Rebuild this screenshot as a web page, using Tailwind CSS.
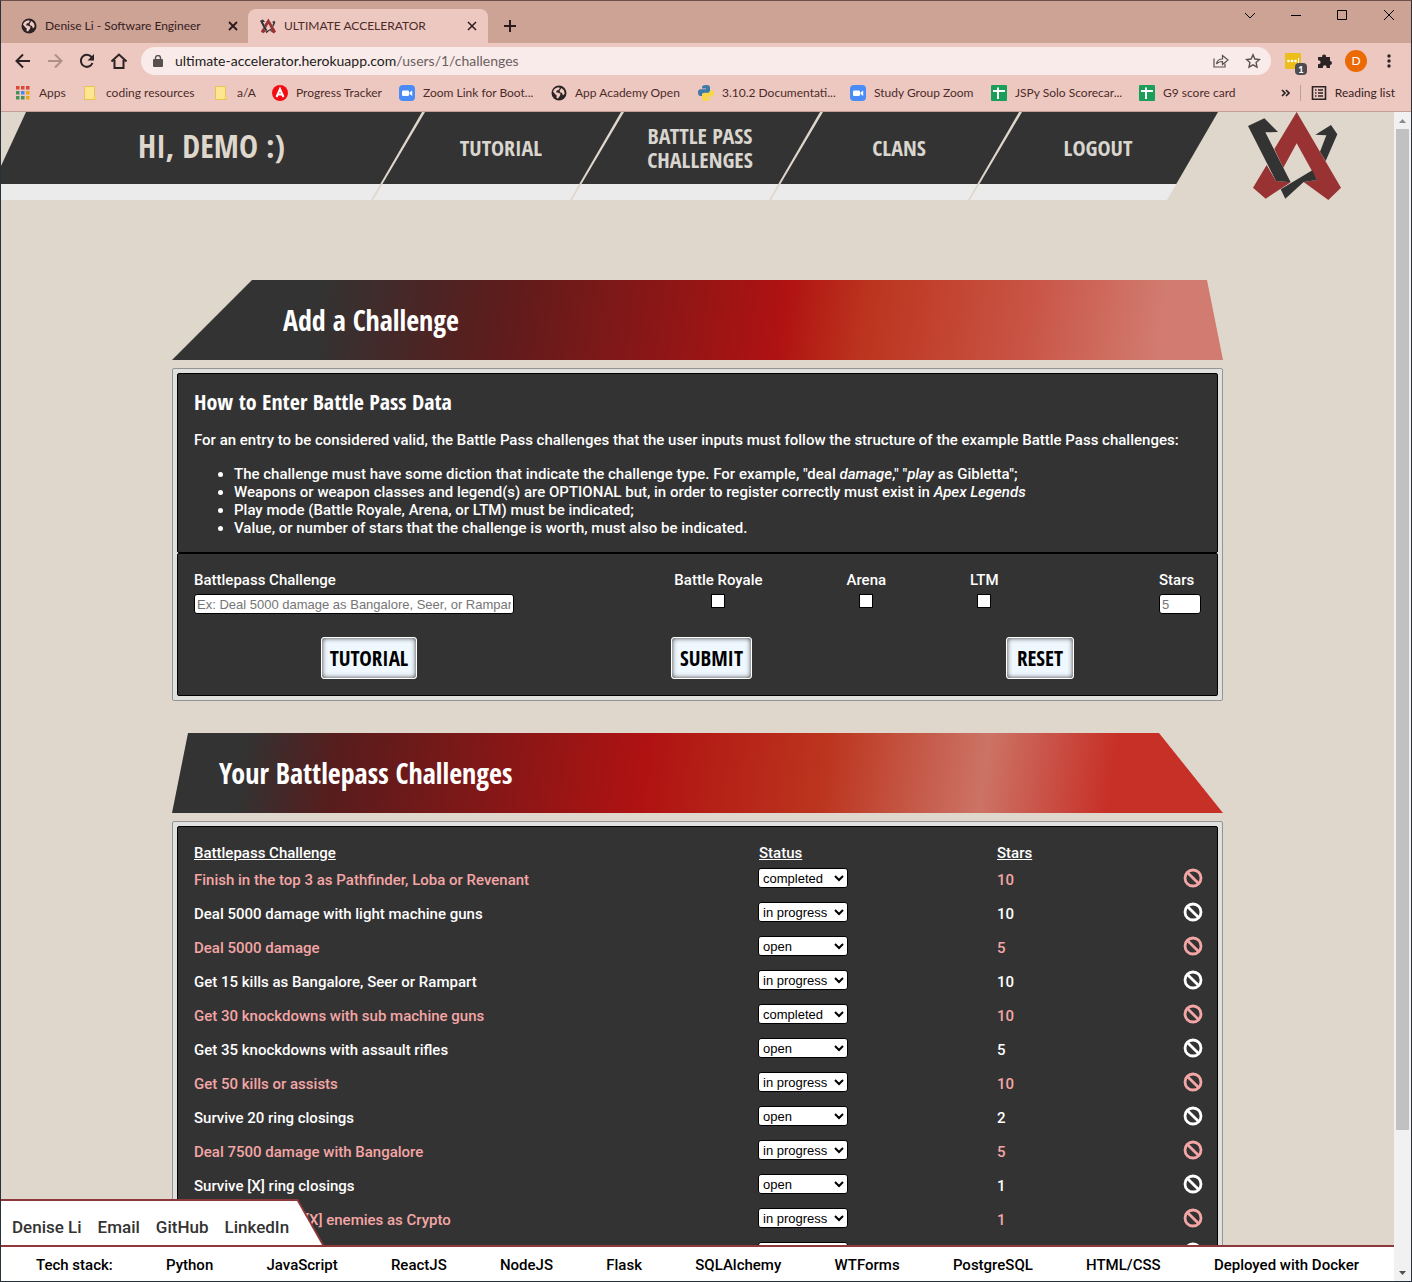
<!DOCTYPE html>
<html lang="en">
<head>
<meta charset="utf-8">
<title>ULTIMATE ACCELERATOR</title>
<script src="https://cdn.jsdelivr.net/npm/@tailwindcss/browser@4"></script>
</head>
<body class="flex h-screen flex-col overflow-hidden border border-[#26333d] border-t-[#6d4f4a] bg-[#dfd7cb] font-['Roboto',sans-serif] text-[15px] font-medium">

<svg class="hidden" aria-hidden="true">
  <symbol id="ua" viewBox="0 0 279 264">
    <path fill="#993233" d="M146 0 79 111l27 56 40-73 61 110-40 6 74 54 38-37zM56 159 15 227l38 33 75-49-44-4z"/>
    <path fill="#333" d="M0 42 49 19l41 41-38 1 76 150-44-4zM249 39l19 28-35 80-17-28 19-49-33-2zM98 232l95-57 14 29-40 6-55 50z"/>
  </symbol>
  <symbol id="globe" viewBox="0 0 16 16">
    <circle cx="8" cy="8" r="7.500" fill="#2b2324"/>
    <path fill="#efc9c2" d="M2 6.500c1-2.500 3-4 5.500-4.300L9 3 7.500 5 5.800 5.500 5 7.200l2.500.6 2 1-.5 2-2 2.700L5.500 13l.2-2.500L4 9z M10.500 3l2.500 2.500.7 3-1.700 2-1-2.500-2-.8-.4-1.700z"/>
  </symbol>
  <symbol id="folder" viewBox="0 0 16 16"><path fill="#fde68f" stroke="#e8c256" d="M2.500 1.500h10v10h1v3h-11z"/><path fill="#f3d36b" d="M11.500 11h2.500v3h-2.500z"/></symbol>
  <symbol id="zoomus" viewBox="0 0 16 16"><rect width="16" height="16" rx="4" fill="#4a8cf7"/><rect x="3" y="5.500" width="7" height="5.500" rx="1.300" fill="#fff"/><path fill="#fff" d="m10.500 7.500 2.700-2v5.500l-2.700-2z"/></symbol>
  <symbol id="sheet" viewBox="0 0 16 16"><rect width="16" height="16" rx="1" fill="#1a9f5b"/><path fill="#fff" d="M6 2.500h2V5h6v2H8v7H6V7H2V5h4z"/></symbol>
  <symbol id="ban" viewBox="0 0 20 20"><g fill="none" stroke="currentColor" stroke-width="2.800"><circle cx="10" cy="10" r="8"/><path d="m4.400 4.400 11.200 11.200"/></g></symbol>
</svg>

<header class="shrink-0 bg-[#edc8c1] font-['Lato','Open_Sans',sans-serif] text-xs font-normal text-[#4b2b29]">
  <div class="flex h-[42px] bg-[#cda395] pt-2">
    <div class="flex w-[247px] items-center pl-5 text-[#35201f]">
      <svg class="mr-2 size-4"><use href="#globe"/></svg>
      <span class="flex-1">Denise Li - Software Engineer</span>
      <button class="mr-[7px] grid size-4 place-items-center" aria-label="Close tab"><svg class="size-[10px]" viewBox="0 0 10 10" stroke="#2b1a19" stroke-width="1.800"><path d="m1 1 8 8M9 1 1 9"/></svg></button>
    </div>
    <div class="flex w-[240px] items-center rounded-t-lg bg-[#edc8c1] pl-3">
      <svg class="mr-2 size-4"><use href="#ua"/></svg>
      <span class="flex-1">ULTIMATE ACCELERATOR</span>
      <button class="mr-2 grid size-4 place-items-center" aria-label="Close tab"><svg class="size-[10px]" viewBox="0 0 10 10" stroke="#2b1a19" stroke-width="1.500"><path d="m1 1 8 8M9 1 1 9"/></svg></button>
    </div>
    <button class="ml-4 grid w-3 place-items-center" aria-label="New tab"><svg class="size-3" viewBox="0 0 12 12" stroke="#2b1a19" stroke-width="2"><path d="M6 0v12M0 6h12"/></svg></button>
    <div class="ml-auto mr-4 flex items-start gap-9 text-black">
      <button aria-label="Tab search"><svg class="h-3 w-[10px]" viewBox="0 0 10 12" fill="none" stroke="currentColor"><path d="m0 4 5 5 5-5"/></svg></button>
      <button aria-label="Minimize"><svg class="h-3 w-[10px]" viewBox="0 0 10 12" fill="none" stroke="currentColor"><path d="M0 6.500h10"/></svg></button>
      <button aria-label="Maximize"><svg class="h-3 w-[10px]" viewBox="0 0 10 12" fill="none" stroke="currentColor"><path d="M.5 1.500h9v9h-9z"/></svg></button>
      <button aria-label="Close"><svg class="h-3 w-[12px]" viewBox="0 0 12 12" fill="none" stroke="currentColor"><path d="m1 1 10 10M11 1l-10 10"/></svg></button>
    </div>
  </div>

  <div class="flex h-9 items-center pl-3.5 text-[#2b2324]">
    <div class="flex gap-4">
      <button aria-label="Back"><svg class="size-4" viewBox="0 0 16 16" fill="none" stroke="currentColor" stroke-width="2"><path d="M15 8H2M8 1.500 1.500 8 8 14.500"/></svg></button>
      <button aria-label="Forward" class="text-[#b08f8b]"><svg class="size-4" viewBox="0 0 16 16" fill="none" stroke="currentColor" stroke-width="2"><path d="M1 8h13M8 1.500 14.500 8 8 14.500"/></svg></button>
      <button aria-label="Reload"><svg class="size-4" viewBox="0 0 16 16" fill="none" stroke="currentColor" stroke-width="2"><path d="M13.500 10a6 6 0 1 1-1-6L14 5.500"/><path fill="currentColor" stroke="none" d="M15 1v6.500H8.500z"/></svg></button>
      <button aria-label="Home"><svg class="size-4" viewBox="0 0 16 16" fill="none" stroke="currentColor" stroke-width="2"><path d="M.5 8.500 8 1.500l7.500 7M3.500 7v8h9V7"/></svg></button>
    </div>
    <div class="ml-3.5 flex h-7 flex-1 items-center rounded-full bg-[#f9ebe9] px-3">
      <svg class="mr-3 h-3 w-[10px]" viewBox="0 0 10 12"><rect y="4" width="10" height="8" rx="1" fill="#58504f"/><path d="M2.500 4.500V3a2.500 2.500 0 0 1 5 0v1.500" fill="none" stroke="#58504f" stroke-width="1.400"/></svg>
      <span class="flex-1 text-sm text-[#231b1b]">ultimate-accelerator.herokuapp.com<span class="text-[#6b605f]">/users/1/challenges</span></span>
      <button aria-label="Share"><svg class="size-4" viewBox="0 0 16 16" fill="none" stroke="#5a5050" stroke-width="1.200"><path d="M1 5.500v8.500h11v-3.500"/><path d="M3.500 11c.5-3.500 3-5 6-5V2.500L15 7l-5.500 4.500V8.500c-2.500 0-4.500.5-6 2.500z"/></svg></button>
      <button aria-label="Bookmark" class="ml-4 mr-[-2px]"><svg class="size-4" viewBox="0 0 16 16" fill="none" stroke="#5a5050" stroke-width="1.400"><path d="m8 1.800 1.900 4.200 4.600.5-3.400 3.100.9 4.500-4-2.300-4 2.300.9-4.500L1.500 6.500 6.100 6z"/></svg></button>
    </div>
    <div class="ml-3.5 mr-5 flex items-center gap-3">
      <button aria-label="Password extension" class="relative h-4 w-5"><svg class="size-4" viewBox="0 0 16 16"><rect width="16" height="16" rx="1" fill="#edbe1b"/><g fill="#fff"><circle cx="3.500" cy="8" r="1.300"/><circle cx="7" cy="8" r="1.300"/><circle cx="10.500" cy="8" r="1.300"/><path d="M13 5h1v6h-1z"/></g></svg><span class="absolute left-[10px] top-[10px] h-3 w-3 rounded-sm bg-[#4e4b52] text-[10px] leading-3 font-bold text-white">1</span></button>
      <button aria-label="Extensions"><svg class="size-4" viewBox="0 0 16 16" fill="#2b2324"><path d="M1 4h4.200a2 2 0 1 1 3.800 0H13v4a2 2 0 1 1 0 4v3H9.500a1.900 1.900 0 1 0-3.500 0H1v-4a1.900 1.900 0 1 0 0-3.500z"/></svg></button>
      <button aria-label="Profile" class="size-[22px] rounded-full bg-[#ec6a06] text-xs text-white">D</button>
      <button aria-label="Menu" class="ml-2"><svg class="h-4 w-1" viewBox="0 0 4 16" fill="#2b2324"><circle cx="2" cy="3" r="1.700"/><circle cx="2" cy="8" r="1.700"/><circle cx="2" cy="13" r="1.700"/></svg></button>
    </div>
  </div>

  <nav aria-label="Bookmarks" class="flex h-[33px] items-center border-b border-[#c39e95] pb-1 pl-3.5 whitespace-nowrap">
    <div class="flex flex-1 items-center gap-4">
      <a href="#" class="flex w-[51px] items-center gap-2"><svg class="size-4 shrink-0" viewBox="0 0 16 16"><g fill="#dc4638"><path d="M1 1h3.500v3.500H1zM6 1h3.500v3.500H6zM11 1h3.500v3.500H11z"/></g><path fill="#46915b" d="M1 6h3.500v3.500H1zM1 11h3.500v3.500H1zM6 11h3.500v3.500H6z"/><path fill="#4689ee" d="M6 6h3.500v3.500H6z"/><path fill="#e7a916" d="M11 6h3.500v3.500H11zM11 11h3.500v3.500H11z"/></svg>Apps</a>
      <a href="#" class="flex w-[115px] items-center gap-2"><svg class="size-4 shrink-0"><use href="#folder"/></svg>coding resources</a>
      <a href="#" class="flex w-[43px] items-center gap-2"><svg class="size-4 shrink-0"><use href="#folder"/></svg>a/A</a>
      <a href="#" class="flex w-[111px] items-center gap-2"><svg class="size-4 shrink-0" viewBox="0 0 16 16"><circle cx="8" cy="8" r="8" fill="#f20d12"/><path d="M4.500 12 8 4l3.500 8M5.500 9.500h5" fill="none" stroke="#fff" stroke-width="2"/></svg>Progress Tracker</a>
      <a href="#" class="flex w-[136px] items-center gap-2"><svg class="size-4 shrink-0"><use href="#zoomus"/></svg>Zoom Link for Boot...</a>
      <a href="#" class="flex w-[131px] items-center gap-2"><svg class="size-4 shrink-0"><use href="#globe"/></svg>App Academy Open</a>
      <a href="#" class="flex w-[136px] items-center gap-2"><svg class="size-4 shrink-0" viewBox="0 0 16 16"><path fill="#3d78a8" d="M8 0c3 0 4 .8 4 2.500V6c0 1.500-1 2.300-2.300 2.300H6C4.500 8.300 4 9.500 4 11H2.500C.8 11 0 9.500 0 7.500S1 4.300 2.500 4.300H8v-.8H4V2.500C4 .8 5.500 0 8 0z"/><path fill="#f8d648" d="M8 16c-3 0-4-.8-4-2.500V10c0-1.500 1-2.300 2.300-2.300H10c1.500 0 2-1.200 2-2.700h1.500C15.200 5 16 6.500 16 8.500s-1 3.200-2.500 3.200H8v.8h4v1C12 15.200 10.500 16 8 16z"/></svg>3.10.2 Documentati...</a>
      <a href="#" class="flex w-[125px] items-center gap-2"><svg class="size-4 shrink-0"><use href="#zoomus"/></svg>Study Group Zoom</a>
      <a href="#" class="flex w-[132px] items-center gap-2"><svg class="size-4 shrink-0"><use href="#sheet"/></svg>JSPy Solo Scorecar...</a>
      <a href="#" class="flex items-center gap-2"><svg class="size-4 shrink-0"><use href="#sheet"/></svg>G9 score card</a>
    </div>
    <button aria-label="More bookmarks" class="mr-[10px]"><svg class="h-2 w-[9px]" viewBox="0 0 9 8" fill="none" stroke="#2b2324" stroke-width="1.700"><path d="m1 1 3 3-3 3M5 1l3 3-3 3"/></svg></button>
    <a href="#" class="mr-4 flex items-center gap-2 border-l border-[#c39e95] pl-[10px] text-[#3a2120]"><svg class="size-4" viewBox="0 0 16 16" fill="none" stroke="#2b2324" stroke-width="1.600"><path d="M1.500 1.800h13v12.400h-13z"/><path d="M4 5h1.500M4 8h1.500M4 11h1.500M7 5h5M7 8h5M7 11h5" stroke-width="1.300"/></svg>Reading list</a>
  </nav>
</header>

<div class="relative flex min-h-0 flex-1">
  <div class="flex min-w-0 flex-1 flex-col overflow-hidden">
    <div class="flex shrink-0">
      <nav aria-label="Main" class="flex h-[88px] flex-1 font-['Open_Sans_Condensed','Roboto_Condensed',sans-serif] text-[22px] font-bold leading-6 text-[#d9d5cf]">
        <div class="flex w-[421px] justify-center bg-linear-to-b from-[#333] from-[72px] to-[#ebebeb] to-[72px] text-[#dfd7cb] [clip-path:polygon(25px_0,100%_0,calc(100%-51px)_100%,0_100%,0_54px)]">
          <span class="flex h-[68px] items-center text-[32px]">HI, DEMO :)</span>
        </div>
        <a href="#" class="-ml-[51px] flex flex-1 justify-center bg-linear-to-b from-[#333] from-[72px] to-[#ebebeb] to-[72px] pl-[10px] [clip-path:polygon(54px_0,100%_0,calc(100%-51px)_100%,2px_100%)]"><span class="flex h-[70px] items-center">TUTORIAL</span></a>
        <a href="#" class="-ml-[51px] flex flex-1 justify-center bg-linear-to-b from-[#333] from-[72px] to-[#ebebeb] to-[72px] pl-[10px] text-center [clip-path:polygon(54px_0,100%_0,calc(100%-51px)_100%,2px_100%)]"><span class="flex h-[70px] items-center">BATTLE PASS<br>CHALLENGES</span></a>
        <a href="#" class="-ml-[51px] flex flex-1 justify-center bg-linear-to-b from-[#333] from-[72px] to-[#ebebeb] to-[72px] pl-[10px] [clip-path:polygon(54px_0,100%_0,calc(100%-51px)_100%,2px_100%)]"><span class="flex h-[70px] items-center">CLANS</span></a>
        <a href="#" class="-ml-[51px] flex flex-1 justify-center bg-linear-to-b from-[#333] from-[72px] to-[#ebebeb] to-[72px] pl-[10px] [clip-path:polygon(54px_0,100%_0,calc(100%-51px)_100%,2px_100%)]"><span class="flex h-[70px] items-center">LOGOUT</span></a>
      </nav>
      <a href="#" aria-label="Ultimate Accelerator home" class="ml-[30px] mr-[53px]"><svg class="h-[88px] w-[93px]"><use href="#ua"/></svg></a>
    </div>

    <main class="mx-auto mt-20 w-full max-w-[1051px] text-white">
      <h1 class="flex h-20 items-center bg-[linear-gradient(98deg,#333_14%,#5c1c1c_31%,#b01212_58%,#bc351e_66%,#c95445_81%,#d27c71_94%)] pl-[111px] font-['Open_Sans_Condensed','Roboto_Condensed',sans-serif] text-[28px] font-bold [clip-path:polygon(80px_0,calc(100%-16px)_0,100%_100%,0_100%)]">Add a Challenge</h1>
      <section class="mt-2 rounded-[2px] border border-[#949494] bg-[#e0e0de] p-1 leading-[18px]">
        <div class="rounded-[2px] border border-black bg-[#333] px-4 py-[15px]">
          <h2 class="font-['Open_Sans_Condensed','Roboto_Condensed',sans-serif] text-[22px] font-bold leading-6">How to Enter Battle Pass Data</h2>
          <p class="mt-[18px]">For an entry to be considered valid, the Battle Pass challenges that the user inputs must follow the structure of the example Battle Pass challenges:</p>
          <ul class="mt-4 list-disc pl-10">
            <li>The challenge must have some diction that indicate the challenge type. For example, "deal <i>damage</i>," "<i>play</i> as Gibletta";</li>
            <li>Weapons or weapon classes and legend(s) are OPTIONAL but, in order to register correctly must exist in <i>Apex Legends</i></li>
            <li>Play mode (Battle Royale, Arena, or LTM) must be indicated;</li>
            <li>Value, or number of stars that the challenge is worth, must also be indicated.</li>
          </ul>
        </div>
        <form class="rounded-[2px] border border-black bg-[#333] px-4 pt-[17px] pb-4">
          <div class="flex justify-between">
            <label class="flex flex-col gap-[5px]">Battlepass Challenge
              <input type="text" placeholder="Ex: Deal 5000 damage as Bangalore, Seer, or Rampart" class="h-5 w-80 rounded-[3px] border border-black bg-white px-0.5 font-['Liberation_Sans',sans-serif] text-[13px] font-normal text-black placeholder:text-[#757575]"></label>
            <div class="flex gap-[84px]">
              <label class="flex flex-col items-center gap-[5px]">Battle Royale <input type="checkbox" class="size-3.5 appearance-none border border-black bg-white"></label>
              <label class="flex flex-col items-center gap-[5px]">Arena <input type="checkbox" class="size-3.5 appearance-none border border-black bg-white"></label>
              <label class="flex flex-col items-center gap-[5px]">LTM <input type="checkbox" class="size-3.5 appearance-none border border-black bg-white"></label>
            </div>
            <label class="flex flex-col gap-[5px]">Stars <input type="text" placeholder="5" class="h-5 w-[42px] rounded-[3px] border border-black bg-white px-0.5 font-['Liberation_Sans',sans-serif] text-[13px] font-normal text-black placeholder:text-[#757575]"></label>
          </div>
          <div class="mt-[23px] flex justify-around font-['Open_Sans_Condensed','Roboto_Condensed',sans-serif] text-[21px] font-bold text-black">
            <button type="button" class="h-[42px] w-24 rounded-[3px] border border-white bg-[#f0f8ff] inset-shadow-[0_0_5px_#333]">TUTORIAL</button>
            <button type="submit" class="h-[42px] w-[81px] rounded-[3px] border border-white bg-[#f0f8ff] inset-shadow-[0_0_5px_#333]">SUBMIT</button>
            <button type="reset" class="h-[42px] w-[68px] rounded-[3px] border border-white bg-[#f0f8ff] inset-shadow-[0_0_5px_#333]">RESET</button>
          </div>
        </form>
      </section>

      <h1 class="mt-8 flex h-20 items-center bg-[linear-gradient(98deg,#333_7%,#581c1c_16%,#b01212_45%,#bc351e_62%,#cc7366_77%,#c73027_89%)] pl-[47px] font-['Open_Sans_Condensed','Roboto_Condensed',sans-serif] text-[28px] font-bold [clip-path:polygon(16px_0,calc(100%-64px)_0,100%_100%,0_100%)]">Your Battlepass Challenges</h1>
      <section class="mt-2 rounded-[2px] border border-[#949494] bg-[#e0e0de] p-1">
        <div class="rounded-[2px] border border-black bg-[#333] pt-[17px] pr-3.5 pb-4 pl-4">
          <table class="w-full table-fixed text-left leading-[18px]">
            <thead>
              <tr class="underline"><th class="w-[56%] font-medium">Battlepass Challenge</th><th class="w-[238px] font-medium">Status</th><th class="font-medium">Stars</th><th aria-label="Delete"></th></tr>
            </thead>
            <tbody id="rows"></tbody>
          </table>
        </div>
      </section>
    </main>
  </div>

  <div aria-hidden="true" class="flex w-[17px] shrink-0 flex-col items-center bg-[#f1f1f1]">
    <svg class="h-[17px] w-[17px] shrink-0" viewBox="0 0 17 17"><path fill="#8a8a8a" d="m5 11 3.500-4 3.500 4z"/></svg>
    <div class="h-[85.600%] w-[13px] bg-[#c1c1c1]"></div>
    <svg class="mt-auto h-[17px] w-[17px] shrink-0" viewBox="0 0 17 17"><path fill="#505050" d="m5 7 3.500 4L12 7z"/></svg>
  </div>

  <footer class="absolute bottom-0 left-0 right-[17px]">
    <div class="h-[46px] w-[323px] bg-[#8f383c] pt-0.5 [clip-path:polygon(0_0,297px_0,100%_100%,0_100%)]">
      <nav aria-label="Contact" class="h-11 w-[321px] bg-white [clip-path:polygon(0_0,296px_0,100%_100%,0_100%)]">
        <div class="flex h-full items-center gap-4 pl-[11px] pt-[10px] text-[17px] text-[#333]">
          <a href="#">Denise Li</a><a href="#">Email</a><a href="#">GitHub</a><a href="#">LinkedIn</a>
        </div>
      </nav>
    </div>
    <ul class="flex h-9 items-center justify-between border-t-2 border-[#8f383c] bg-white px-[35px] pt-0.5 text-black">
      <li>Tech stack:</li><li>Python</li><li>JavaScript</li><li>ReactJS</li><li>NodeJS</li><li>Flask</li><li>SQLAlchemy</li><li>WTForms</li><li>PostgreSQL</li><li>HTML/CSS</li><li>Deployed with Docker</li>
    </ul>
  </footer>
</div>

<script>
const challenges = [
  ["Finish in the top 3 as Pathfinder, Loba or Revenant", "completed", 10],
  ["Deal 5000 damage with light machine guns", "in progress", 10],
  ["Deal 5000 damage", "open", 5],
  ["Get 15 kills as Bangalore, Seer or Rampart", "in progress", 10],
  ["Get 30 knockdowns with sub machine guns", "completed", 10],
  ["Get 35 knockdowns with assault rifles", "open", 5],
  ["Get 50 kills or assists", "in progress", 10],
  ["Survive 20 ring closings", "open", 2],
  ["Deal 7500 damage with Bangalore", "in progress", 5],
  ["Survive [X] ring closings", "open", 1],
  ["Knock down the [X] enemies as Crypto", "in progress", 1],
  ["Deal 2500 damage", "open", 5]
];
document.getElementById("rows").innerHTML = challenges.map(([name, status, stars], i) => `
  <tr class="h-[34px] align-top ${i % 2 ? "text-white" : "text-[#f4a6a6]"}">
    <td class="pt-[9px]">${name}</td>
    <td class="pt-1.5"><select aria-label="Status of ${name}" class="block -ml-px h-5 w-[90px] rounded-[3px] border border-black bg-white font-['Liberation_Sans',sans-serif] text-[13px] leading-4 font-normal text-black">
      ${["open", "in progress", "completed"].map(s => `<option${s === status ? " selected" : ""}>${s}</option>`).join("")}
    </select></td>
    <td class="pt-[9px]">${stars}</td>
    <td class="pt-1.5"><button aria-label="Delete ${name}" class="ml-auto block"><svg class="size-5"><use href="#ban"/></svg></button></td>
  </tr>`).join("");
</script>
</body>
</html>
